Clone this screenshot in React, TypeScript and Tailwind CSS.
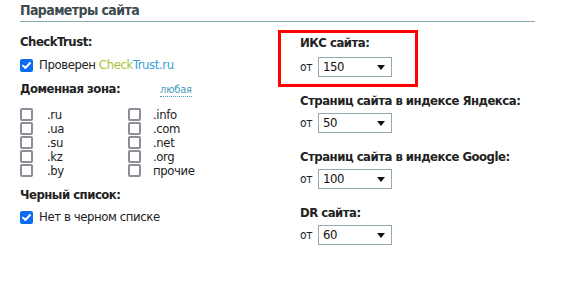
import React from "react";

const font = { fontFamily: '"DejaVu Sans Condensed", "DejaVu Sans", sans-serif' };

function Checked() {
  return (
    <span className="inline-flex w-[13px] h-[13px] rounded-[2px] bg-[#0a6cf0] items-center justify-center shrink-0">
      <svg width="11" height="11" viewBox="0 0 11 11">
        <path d="M2 5.6 L4.4 8 L9 3" stroke="#fff" strokeWidth="2" fill="none" strokeLinecap="round" strokeLinejoin="round" />
      </svg>
    </span>
  );
}

function Unchecked() {
  return <span className="inline-block w-[13px] h-[13px] rounded-[2px] border-2 border-[#8d8d98] bg-white shrink-0" />;
}

function Select({ value }: { value: string }) {
  return (
    <div className="flex items-center gap-[5px] h-[20px]">
      <span className="text-[12px] text-[#222] w-[13px] tracking-[-0.3px]">от</span>
      <div className="w-[74px] h-[20px] border border-[#93a8b0] flex items-center justify-between pl-[4px] pr-[6px]">
        <span className="text-[13px] text-[#111] tracking-[-0.4px]">{value}</span>
        <svg width="8" height="5" viewBox="0 0 8 5">
          <path d="M0 0 H8 L4 5 Z" fill="#111" />
        </svg>
      </div>
    </div>
  );
}

export default function App() {
  const left = [".ru", ".ua", ".su", ".kz", ".by"];
  const right = [".info", ".com", ".net", ".org", "прочие"];
  return (
    <div className="w-[562px] h-[283px] bg-white pl-[20px] text-[#222]" style={font}>
      <div className="w-[515px] h-[22px] border-b border-[#86a9b2] flex items-end pb-[3px]">
        <span className="text-[14px] font-bold text-[#3c4a4f] leading-[16px] tracking-[-0.6px]">Параметры сайта</span>
      </div>
      <div className="flex">
        <div className="w-[280px] flex flex-col tracking-[-0.4px]">
          <div className="mt-[12px] h-[16px] text-[13px] font-bold leading-[16px] tracking-[-0.5px]">CheckTrust:</div>
          <div className="mt-[8px] h-[14px] flex items-center gap-[6px] text-[13px] leading-[14px]">
            <Checked />
            <span>
              Проверен <span className="text-[#a9c534]">Check</span>
              <span className="text-[#3a9dd8]">Trust.ru</span>
            </span>
          </div>
          <div className="mt-[9px] h-[16px] flex items-center text-[13px] leading-[16px]">
            <span className="font-bold w-[140px] tracking-[-0.5px]">Доменная зона:</span>
            <span className="text-[11px] text-[#4a9cb8] border-b border-dotted border-[#4a9cb8] leading-[12px] mt-[3px] tracking-[-0.2px]">любая</span>
          </div>
          <div className="mt-[11px] flex">
            <div className="w-[108px] flex flex-col">
              {left.map((t) => (
                <div key={t} className="h-[14px] flex items-start gap-[14px] text-[13px] leading-[13px]">
                  <Unchecked />
                  <span>{t}</span>
                </div>
              ))}
            </div>
            <div className="flex flex-col">
              {right.map((t) => (
                <div key={t} className="h-[14px] flex items-start gap-[12px] text-[13px] leading-[13px]">
                  <Unchecked />
                  <span>{t}</span>
                </div>
              ))}
            </div>
          </div>
          <div className="mt-[9px] h-[16px] text-[13px] font-bold leading-[16px] tracking-[-0.5px]">Черный список:</div>
          <div className="mt-[7px] h-[14px] flex items-center gap-[6px] text-[13px] leading-[14px]">
            <Checked />
            <span>Нет в черном списке</span>
          </div>
        </div>
        <div className="flex flex-col">
          <div className="relative">
            <div className="absolute left-[-22px] top-[8px] w-[140px] h-[57px] border-[3px] border-[#ff0000]" />
            <div className="mt-[13px] h-[16px] text-[13px] font-bold leading-[16px] tracking-[-0.5px]">ИКС сайта:</div>
            <div className="mt-[6px]"><Select value="150" /></div>
          </div>
          <div className="mt-[16px] h-[16px] text-[13px] font-bold leading-[16px] tracking-[-0.5px]">Страниц сайта в индексе Яндекса:</div>
          <div className="mt-[4px]"><Select value="50" /></div>
          <div className="mt-[16px] h-[16px] text-[13px] font-bold leading-[16px] tracking-[-0.5px]">Страниц сайта в индексе Google:</div>
          <div className="mt-[4px]"><Select value="100" /></div>
          <div className="mt-[16px] h-[16px] text-[13px] font-bold leading-[16px] tracking-[-0.5px]">DR сайта:</div>
          <div className="mt-[4px]"><Select value="60" /></div>
        </div>
      </div>
    </div>
  );
}
